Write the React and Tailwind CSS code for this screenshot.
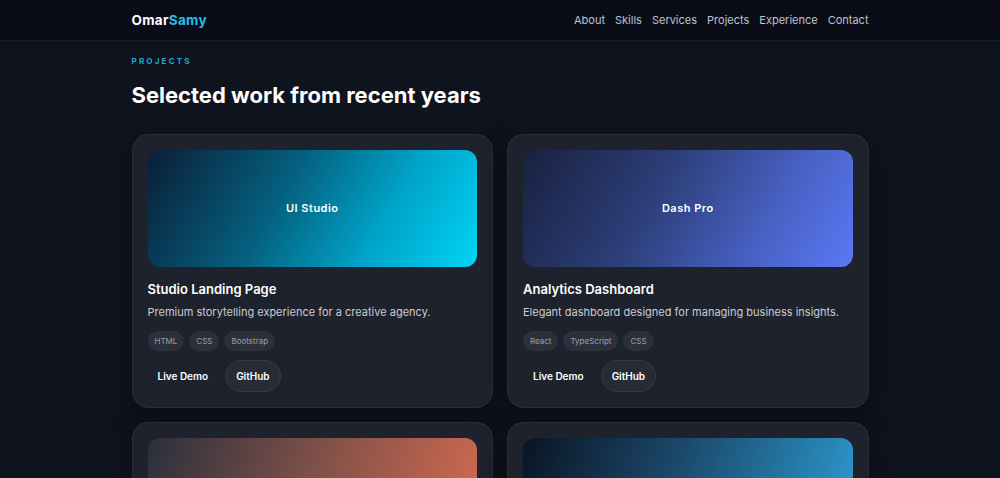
import React from "react";

const projects = [
  {
    label: "UI Studio",
    grad: "bg-[linear-gradient(120deg,#0b1e36_0%,#05607f_40%,#00a3c8_70%,#00d4f5_100%)]",
    title: "Studio Landing Page",
    desc: "Premium storytelling experience for a creative agency.",
    tags: ["HTML", "CSS", "Bootstrap"],
  },
  {
    label: "Dash Pro",
    grad: "bg-[linear-gradient(120deg,#18213f_0%,#2d3f7a_40%,#4a63c8_75%,#5b78f5_100%)]",
    title: "Analytics Dashboard",
    desc: "Elegant dashboard designed for managing business insights.",
    tags: ["React", "TypeScript", "CSS"],
  },
  {
    label: "",
    grad: "bg-[linear-gradient(110deg,#2b2f3c_0%,#7a4f48_45%,#d86c50_100%)]",
    title: "",
    desc: "",
    tags: [],
  },
  {
    label: "",
    grad: "bg-[linear-gradient(110deg,#0a1424_0%,#1c4a6c_45%,#2d9fd6_100%)]",
    title: "",
    desc: "",
    tags: [],
  },
];

function Card({ p }) {
  return (
    <div className="rounded-[16px] border border-[#2a2e39] bg-[#1e222c] p-[15px] shadow-[0_8px_24px_rgba(0,0,0,0.35)]">
      <div className={`h-[117px] rounded-[12px] ${p.grad} flex items-center justify-center`}>
        <span className="text-[11px] font-semibold tracking-[0.5px] text-white">{p.label}</span>
      </div>
      {p.title && (
        <>
          <h3 className="mt-[13px] text-[13px] font-semibold leading-[18px] text-white">{p.title}</h3>
          <p className="mt-[6px] text-[11px] leading-[16px] text-[#c9cdd4]">{p.desc}</p>
          <div className="mt-[11px] flex gap-[5px]">
            {p.tags.map((t) => (
              <span
                key={t}
                className="rounded-full bg-[#2c303a] px-[7px] py-[4px] text-[8px] leading-[12px] text-[#9aa0aa]"
              >
                {t}
              </span>
            ))}
          </div>
          <div className="mt-[9px] flex items-center gap-[7px]">
            <span className="px-[10px] py-[8px] text-[10px] font-semibold leading-[14px] text-white">Live Demo</span>
            <span className="rounded-full border border-[#353a45] bg-[#272b35] px-[10px] py-[8px] text-[10px] font-semibold leading-[14px] text-white">
              GitHub
            </span>
          </div>
        </>
      )}
    </div>
  );
}

export default function App() {
  return (
    <div
      className="h-[478px] overflow-hidden bg-[#0f131d]"
      style={{ fontFamily: "Inter, 'Open Sans', sans-serif" }}
    >
      <nav className="h-[41px] border-b border-[#161a26] bg-[#0a0c18]">
        <div className="mx-auto flex h-full w-[737px] items-center justify-between">
          <div className="text-[13.5px] font-bold tracking-[0.3px] text-white">
            Omar<span className="text-[#22bfe6]">Samy</span>
          </div>
          <div className="flex gap-[10px] text-[11px] text-[#bfc3cc]">
            <span>About</span>
            <span>Skills</span>
            <span>Services</span>
            <span>Projects</span>
            <span>Experience</span>
            <span>Contact</span>
          </div>
        </div>
      </nav>
      <main className="mx-auto w-[737px]">
        <div className="pt-[15px] text-[8px] font-bold leading-[10px] tracking-[2.2px] text-[#1fa8cc]">PROJECTS</div>
        <h2 className="mt-[15px] text-[22px] font-bold leading-[28px] text-white">Selected work from recent years</h2>
        <div className="mt-[25px] grid grid-cols-2 gap-[14px]">
          {projects.map((p, i) => (
            <Card key={i} p={p} />
          ))}
        </div>
      </main>
    </div>
  );
}
